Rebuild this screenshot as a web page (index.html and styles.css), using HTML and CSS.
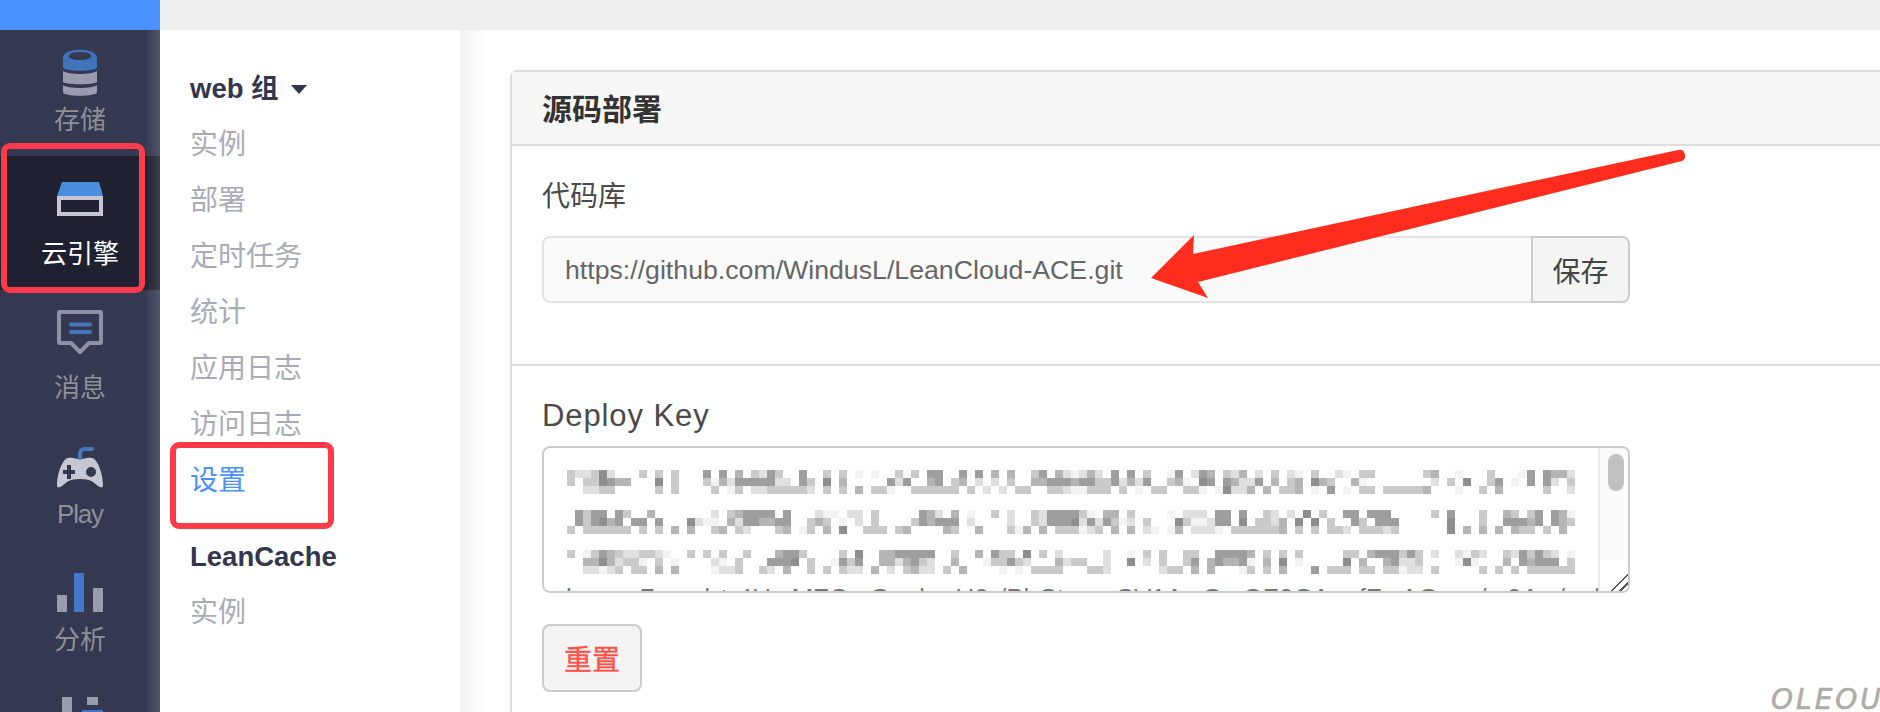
FILE: index.html
```html
<!DOCTYPE html>
<html lang="zh-CN">
<head>
<meta charset="utf-8">
<title>源码部署</title>
<link rel="stylesheet" href="styles.css">
</head>
<body>
<div class="app">
  <aside class="rail">
    <div class="rail-brand"></div>
    <nav class="rail-nav">
      <a class="rail-item">
        <svg class="rail-icon" viewBox="0 0 60 66">
          <path class="fill-gray" d="M13 33v11c3 3 31 3 34 0V33c-5 4-29 4-34 0z"/>
          <path class="fill-gray" d="M13 47v7c0 5 34 5 34 0v-7c-5 4-29 4-34 0z"/>
          <path class="fill-blue" fill-rule="evenodd" d="M13 20c0-11 34-11 34 0v9c0 5-34 5-34 0zM30 14c-15 0-15 8 0 8s15-8 0-8z"/>
        </svg>
        <span class="rail-label">存储</span>
      </a>
      <a class="rail-item rail-item-active">
        <svg class="rail-icon" viewBox="0 0 60 66">
          <path class="fill-sky" d="M12 10h37l4 14H7z"/>
          <path class="fill-light" fill-rule="evenodd" d="M7 24h46v20H7zM11 28v12h38V28z"/>
        </svg>
        <span class="rail-label">云引擎</span>
      </a>
      <a class="rail-item">
        <svg class="rail-icon" viewBox="0 0 60 66">
          <path class="line-gray" d="M9 6h42v31H39l-9 9-9-9H9z"/>
          <path class="line-blue" d="M21 18.500h19M21 26h19"/>
        </svg>
        <span class="rail-label">消息</span>
      </a>
      <a class="rail-item">
        <svg class="rail-icon" viewBox="0 0 60 66">
          <path class="fill-light" fill-rule="evenodd" d="M18 26c5-1 8 1 12 1s7-2 12-1c6 1 11 17 11 27 0 3-2 3-5 1-5-4-7-7-18-7s-13 3-18 7c-3 2-5 2-5-1 0-10 5-26 11-27zM17 33v5h-4v4h4v5h4v-5h4v-4h-4v-5zM41 35a5 5 0 1 0 0 10 5 5 0 0 0 0-10z"/>
          <path class="line-blue" d="M30 26v-4c0-3 1-5 5-5h7"/>
        </svg>
        <span class="rail-label rail-label-latin">Play</span>
      </a>
      <a class="rail-item">
        <svg class="rail-icon" viewBox="0 0 60 66">
          <path class="fill-gray" d="M7 37h10v17H7zM43 30h10v24H43z"/>
          <path class="fill-bar" d="M24 15h10v39H24z"/>
        </svg>
        <span class="rail-label">分析</span>
      </a>
      <a class="rail-item">
        <svg class="rail-icon" viewBox="0 0 60 66">
          <path class="fill-gray" d="M12 13h10v40H12zM37 13h11v8H37z"/>
          <path class="fill-bar" d="M32 26h21v30H32z"/>
        </svg>
      </a>
    </nav>
  </aside>
  <div class="page">
    <div class="topbar"></div>
    <div class="page-body">
      <nav class="subnav">
        <div class="subnav-head">web 组 <i class="caret"></i></div>
        <a>实例</a>
        <a>部署</a>
        <a>定时任务</a>
        <a>统计</a>
        <a>应用日志</a>
        <a>访问日志</a>
        <a class="is-current">设置</a>
        <div class="subnav-head subnav-head-next">LeanCache</div>
        <a>实例</a>
      </nav>
      <main class="content">
        <section class="panel">
          <h2 class="panel-title">源码部署</h2>
          <div class="panel-block block-repo">
            <div class="field-label">代码库</div>
            <div class="input-group">
              <div class="input-value">https://github.com/WindusL/LeanCloud-ACE.git</div>
              <button class="btn btn-addon">保存</button>
            </div>
          </div>
          <div class="panel-block block-key">
            <div class="field-label field-label-latin">Deploy Key</div>
            <div class="key-box">
              <svg class="mosaic" id="mosaic" width="1024" height="112" viewBox="0 0 1024 112"></svg>
              <div class="key-cut">k      7    d t 4U  MZQ  G  d   U0 /Pl St     CV1A  G  OZ0CA   fZ  AG    /  0A  /  d</div>
              <div class="scroll-track"><div class="scroll-thumb"></div></div>
              <div class="scroll-corner"></div>
            </div>
            <button class="btn btn-danger">重置</button>
          </div>
        </section>
      </main>
    </div>
  </div>
  <div class="mark mark-engine"></div>
  <div class="mark mark-settings"></div>
  <svg class="arrow" viewBox="0 0 1880 712" width="1880" height="712">
    <path d="M1678 150 1193 254 1194 235 1151 278 1208 298 1198 282 1682 161Q1686 159 1685 155 1684 149 1678 150Z"/>
  </svg>
  <div class="watermark">OLEOU</div>
</div>
<script src="script.js"></script>
</body>
</html>
```
FILE: styles.css
```css
* { box-sizing: border-box; }
html, body { margin: 0; height: 712px; overflow: hidden; background: #fff; }
body { font-family: "Liberation Sans", "Noto Sans CJK SC", sans-serif; }
.app { position: relative; display: flex; width: 1880px; height: 712px; overflow: hidden; }

.rail { position: relative; flex: 0 0 160px; display: flex; flex-direction: column; background: #343851; }
.rail::after { content: ""; position: absolute; top: 30px; right: 0; bottom: 0; width: 16px; background: linear-gradient(to right, rgba(255,255,255,0), rgba(255,255,255,.14)); }
.rail-brand { flex: 0 0 30px; background: #4a90ff; }
.rail-nav { display: flex; flex-direction: column; }
.rail-item { display: flex; flex-direction: column; align-items: center; height: 126px; padding-top: 8px; color: #8f9094; font-size: 26px; line-height: 28px; }
.rail-item-active { height: 134px; padding-top: 16px; margin-bottom: 8px; background: #1f2030; color: #fff; }
.rail-icon { display: block; flex: none; width: 60px; height: 66px; }
.rail-label { margin-top: 2px; }
.rail-label-latin { letter-spacing: -1.2px; }
.fill-gray { fill: #9a9bae; }
.fill-blue { fill: #3f74ba; }
.fill-sky { fill: #4a8fdf; }
.fill-bar { fill: #4477c9; }
.fill-light { fill: #c6c7d1; }
.line-gray { fill: none; stroke: #8f90a6; stroke-width: 4px; stroke-linejoin: round; }
.line-blue { fill: none; stroke: #4477c0; stroke-width: 4px; stroke-linecap: round; }

.page { flex: 1; display: flex; flex-direction: column; min-width: 0; }
.topbar { flex: 0 0 30px; background: #eee; }
.page-body { flex: 1; display: flex; min-height: 0; }

.subnav { flex: 0 0 300px; display: flex; flex-direction: column; padding: 31px 0 0 30px; background: #fff; color: #a9abb9; font-size: 28px; line-height: 56px; }
.subnav-head { color: #33364f; font-size: 27.5px; font-weight: 700; }
.subnav-head-next { margin-top: 20px; }
.caret { display: inline-block; width: 0; height: 0; margin-left: 5px; vertical-align: 4px; border-style: solid; border-width: 9px 8px 0; border-color: #33364f transparent transparent; }
.is-current { color: #4a90ff; }

.content { flex: 1; min-width: 0; padding: 40px 0 0 50px; background: linear-gradient(to right, #f3f3f3, #fff 28px); overflow: hidden; }
.panel { width: 1400px; height: 800px; border: 2px solid #dcdcdc; border-radius: 8px 0 0 0; background: #fff; }
.panel-title { height: 74px; margin: 0; padding-left: 30px; border-bottom: 2px solid #dcdcdc; background: #f7f7f7; color: #333; font-size: 30px; font-weight: 700; line-height: 76px; }
.panel-block { padding-left: 30px; }
.block-repo { height: 220px; padding-top: 31px; border-bottom: 2px solid #dcdcdc; }
.block-key { padding-top: 30px; }
.field-label { height: 40px; color: #4a4a4a; font-size: 28px; line-height: 40px; }
.field-label-latin { font-size: 31px; letter-spacing: .9px; }

.input-group { display: flex; width: 1088px; height: 67px; margin-top: 19px; }
.input-value { flex: 1; padding-left: 21px; border: 2px solid #e3e3e3; border-right: 0; border-radius: 8px 0 0 8px; background: #fafafa; color: #666; font-size: 26.7px; line-height: 65px; }
.btn { font-family: inherit; border: 2px solid #ccc; background: #f4f4f4; padding: 0; }
.btn-addon { flex: 0 0 99px; border-radius: 0 8px 8px 0; color: #444; font-size: 28px; }
.btn-danger { display: block; width: 100px; height: 68px; margin-top: 31px; border-radius: 8px; color: #ff5046; font-size: 28px; -webkit-text-stroke: .3px #ff5046; }

.key-box { position: relative; width: 1088px; height: 147px; margin-top: 10px; border: 2px solid #ccc; border-radius: 8px; overflow: hidden; background: #fff; }
.mosaic { display: block; position: absolute; left: 23px; top: 22px; filter: blur(.3px); }
.key-cut { position: absolute; left: 22px; top: 135px; color: #777; font-size: 26px; line-height: 30px; white-space: pre; word-spacing: 3px; }
.scroll-track { position: absolute; top: 0; right: 0; width: 30px; height: 115px; padding: 6px 0 0 8px; border-left: 2px solid #eaeaea; border-bottom: 2px solid #ddd; background: #fafafa; }
.scroll-thumb { width: 16px; height: 37px; border-radius: 8px; background: #c1c1c1; }
.scroll-corner { position: absolute; right: 0; bottom: 0; width: 30px; height: 30px; border-left: 2px solid #eaeaea; background: linear-gradient(135deg, #fff 70%, #555 70%, #555 74%, #fff 74%, #fff 84%, #555 84%, #555 88%, #fff 88%); }

.mark { position: absolute; border: 6px solid #fc3a4a; border-radius: 9px; }
.mark-engine { left: 1px; top: 143px; width: 144px; height: 150px; }
.mark-settings { left: 170px; top: 442px; width: 164px; height: 87px; }
.arrow { position: absolute; left: 0; top: 0; }
.arrow path { fill: #ff2d1e; }
.watermark { position: absolute; left: 1771px; top: 684px; color: #aeaca9; font-family: "DejaVu Sans", sans-serif; font-size: 28px; font-style: italic; letter-spacing: 3px; line-height: 32px; white-space: nowrap; -webkit-text-stroke: .6px #aeaca9; }
```
FILE: script.js
```js
var rows = [
  ["322362...3 .3.3...5.5 .4.3253..5 ..3.3.1.1. .3.3.55..5 .5.4.4..35 .42 1242.5. 5.3..15.25 4.324.2.3. 21.3..21.3 3......34. .1...3...1 5.5442",
   "3.336544.. .6.3...314 25555522.5 3.6.4..... 525..45.34 .2.2.3..44 555 4553352 425..341.6 5.54225.4. 34.643..41 ........2. 3.6..35.1. 5.52.3",
   "..2233.... .3.3....3. 13.2233333 2.3.3.4.33 1..333333. 3.2.2.33.. 332 11333.3 .1.33..331 .16224.4.3 34.1.5.1.3 3.333334.. .1..3.4... ..3..2"],
  [".5355.53.. 4.......2. 345555.5.. .211.22.3. ....542.4. 1..3.2..32 555 531.44. 3....1.222 .55.5..32. 2.6.3..55. 555.....3. 5...3..43. 35.541",
   ".535645.55 .5...6211. 42554455.. 343.1.2.3. ...354555. 2....2..32 555 6252531 2.3...6311 255.6.3324 .6.6.3..53 .555...... 6...3..555 45.543",
   "3.333333.3 .3.4.4..34 .32...34.1 3.4.6..333 .34....43. .4...314.4 .33 3123.4. 4.21.14.22 21.3333334 .3.3.332.3 3323...... 6.4.4.4.43 3.3.4."],
  ["3.13543223 321..3.3.3 ..3...4553 ....3.6..4 455555..3. .4.533.6.3 .2. ....2.. 1.3.3..33. .55554.3.3 .3.....33. 4555353.2. .2132..325 3532.1",
   "..44642331 .3.1....21 .3...5556. 3..1535..4 424532..4. ..133532.. .42 33..2.. 6.2.3..35. 454451.4.6 .1.....6.4 ..45223... .161...4.5 4555.3",
   "..22123.33 .4.4....12 23..32.4.. 3.3.322.4. 2.3422.3.4 ....1.1.33 33. ..332.. ....233.4. 4...13.3.4 ...5.333.3 3.33122.3. ....3.3.3. 333333"]
];
var shades = { "1": "#f3f3f3", "2": "#e0e0e0", "3": "#cacaca", "4": "#b5b5b5", "5": "#9e9e9e", "6": "#8e8e8e" };
var svg = document.getElementById("mosaic");
rows.forEach(function (line, l) {
  line.forEach(function (row, r) {
    row.replace(/ /g, "").split("").forEach(function (ch, i) {
      if (!shades[ch]) return;
      var rect = document.createElementNS("http://www.w3.org/2000/svg", "rect");
      rect.setAttribute("x", i * 8);
      rect.setAttribute("y", l * 40 + r * 8);
      rect.setAttribute("width", 8);
      rect.setAttribute("height", 8);
      rect.setAttribute("fill", shades[ch]);
      svg.appendChild(rect);
    });
  });
});
```
